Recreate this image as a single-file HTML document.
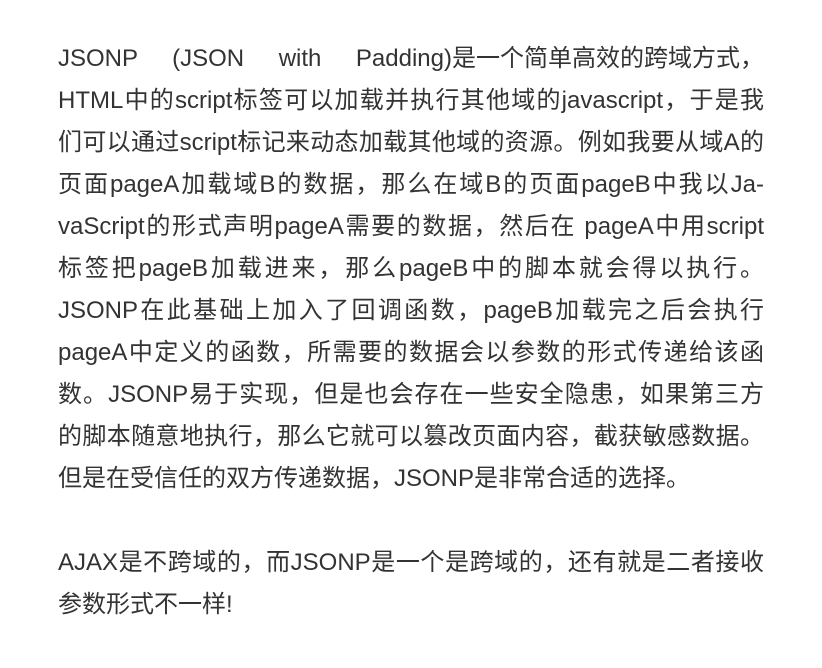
<!DOCTYPE html>
<html><head><meta charset="utf-8"><style>
html,body{margin:0;padding:0;background:#fff;width:822px;height:668px;overflow:hidden}
.w{position:absolute;left:58px;top:38px;width:706px;font-family:"Liberation Sans","Noto Sans CJK SC",sans-serif;font-size:24px;line-height:42px;color:#333}
.l{text-align:justify;text-align-last:justify;white-space:nowrap;height:42px}
.ib{display:inline-block}
.n{text-align:left;text-align-last:left;height:42px;white-space:nowrap}
</style></head><body><div class="w">
<div class="l">JSONP (JSON with <span class="ib">Padding)是一个简单高效的跨域方式，</span></div>
<div class="l">HTML中的script标签可以加载并执行其他域的javascript，于是我</div>
<div class="l">们可以通过script标记来动态加载其他域的资源。例如我要从域A的</div>
<div class="l">页面pageA加载域B的数据，那么在域B的页面pageB中我以Ja-</div>
<div class="l">vaScript的形式声明pageA需要的数据，然后在 pageA中用script</div>
<div class="l">标签把pageB加载进来，那么pageB中的脚本就会得以执行。</div>
<div class="l">JSONP在此基础上加入了回调函数，pageB加载完之后会执行</div>
<div class="l">pageA中定义的函数，所需要的数据会以参数的形式传递给该函</div>
<div class="l">数。JSONP易于实现，但是也会存在一些安全隐患，如果第三方</div>
<div class="l">的脚本随意地执行，那么它就可以篡改页面内容，截获敏感数据。</div>
<div class="n">但是在受信任的双方传递数据，JSONP是非常合适的选择。</div>
<div class="n"></div>
<div class="l">AJAX是不跨域的，而JSONP是一个是跨域的，还有就是二者接收</div>
<div class="n">参数形式不一样!</div>
</div></body></html>
